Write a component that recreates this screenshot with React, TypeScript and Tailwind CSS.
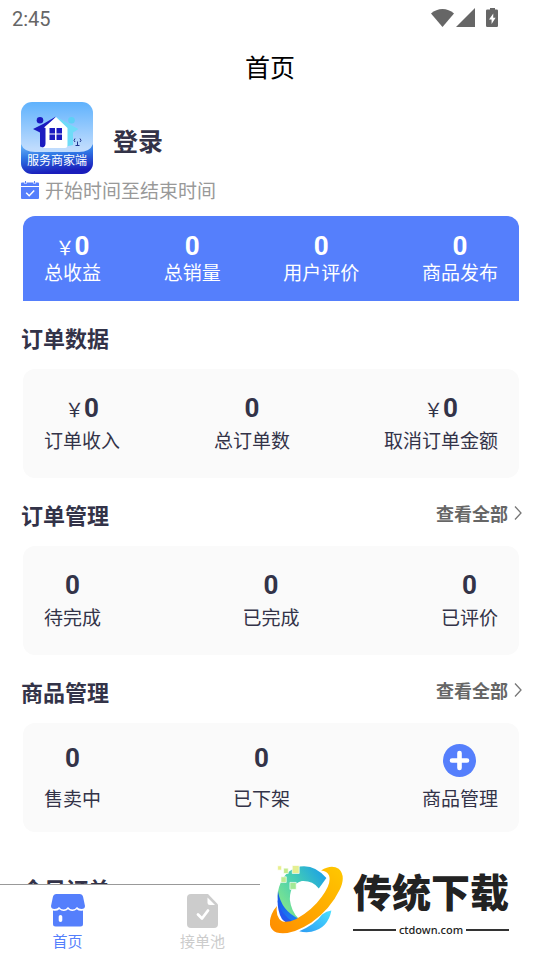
import type { ReactNode } from "react";

type Stat = { label: string; value?: string; money?: boolean; icon?: ReactNode };

const summary: Stat[] = [
  { label: "总收益", value: "0", money: true },
  { label: "总销量", value: "0" },
  { label: "用户评价", value: "0" },
  { label: "商品发布", value: "0" },
];

const orderData: Stat[] = [
  { label: "订单收入", value: "0", money: true },
  { label: "总订单数", value: "0" },
  { label: "取消订单金额", value: "0", money: true },
];

const orderStates: Stat[] = [
  { label: "待完成", value: "0" },
  { label: "已完成", value: "0" },
  { label: "已评价", value: "0" },
];

const products: Stat[] = [
  { label: "售卖中", value: "0" },
  { label: "已下架", value: "0" },
  { label: "商品管理", icon: <PlusIcon /> },
];

function PlusIcon() {
  return (
    <svg viewBox="0 0 33 33" className="h-[33px] w-[33px]" aria-hidden="true">
      <circle cx="16.5" cy="16.5" r="16.5" fill="#557ffc" />
      <path d="M16.5 9v15M9 16.5h15" stroke="#fff" strokeWidth="4.6" strokeLinecap="round" />
    </svg>
  );
}

function StatusBar() {
  return (
    <div className="flex h-9 items-center justify-between pl-3 pr-[41px] pt-0.5 text-[#666]">
      <span className="font-['Roboto',sans-serif] text-xl leading-8">2:45</span>
      <svg viewBox="0 0 68 20" className="mb-0.5 h-5 w-[68px]" fill="#666" aria-hidden="true">
        <path d="M0 5.6C6.5 -.6 16.500 -.6 23 5.600L11.500 19Z" />
        <path d="M25 19H44V0Z" />
        <path
          fillRule="evenodd"
          d="M59 -.5h5v2h1.800q1.200 0 1.200 1.200v15.100q0 1.200-1.200 1.200h-9.600q-1.200 0-1.200-1.200V2.700q0-1.200 1.200-1.200H59ZM62.300 5.500l-4.300 6h2.600v4.500l4-6.200h-2.400Z"
        />
      </svg>
    </div>
  );
}

function AppLogo() {
  return (
    <div className="relative h-[72px] w-[72px] overflow-hidden rounded-[11px]">
      <svg viewBox="0 0 72 72" className="h-full w-full" aria-hidden="true">
        <defs>
          <linearGradient id="sky" x1="0" y1="0" x2="0" y2="1">
            <stop offset="0" stopColor="#5fb2fd" />
            <stop offset=".65" stopColor="#c0dcfd" />
          </linearGradient>
          <linearGradient id="sea" x1="0" y1="0" x2=".25" y2="1">
            <stop offset="0" stopColor="#6db9fa" />
            <stop offset=".45" stopColor="#2f76e4" />
            <stop offset="1" stopColor="#1a1dbb" />
          </linearGradient>
        </defs>
        <rect width="72" height="72" fill="url(#sky)" />
        <path d="M0 42Q3 50 14 50H58Q69 50 72 42V72H0Z" fill="url(#sea)" />
        <circle cx="19" cy="18.300" r="3.300" fill="#1b1bc0" />
        <path d="M12 27l10-5 13-7.500-10 12.500V41q0 3-3 4.500l-3-1V30.500Z" fill="#1b1bc0" />
        <circle cx="50.500" cy="18.300" r="3.300" fill="#5dd0f5" />
        <path d="M57.500 27l-9.500-5-13-7.500 10 12.500V44.500l7-1.500V30.500Z" fill="#6fdcf8" />
        <path d="M35 15L46.500 26V43Q46.500 46 44 46H21q3.500-1 3.500-4V26L23 25.500Z" fill="#fff" />
        <path d="M28.500 26h5.500v5.500h-5.500zM35.500 26h5.500v5.500h-5.500zM28.500 32.500h5.500v5.500h-5.500zM35.500 32.500h5.500v5.500h-5.500z" fill="#1b1bc0" />
        <path d="M56.500 43.500v-4m-2 4h4M54 40q-2-1.500 0-3.500M59 40q2-1.500 0-3.500" stroke="#20368f" fill="none" />
      </svg>
      <span className="absolute inset-x-0 bottom-1.5 text-center text-xs leading-4 text-white">服务商家端</span>
    </div>
  );
}

function CalendarIcon() {
  return (
    <svg viewBox="0 0 18 18" className="h-[18px] w-[18px]" fill="#557ffc" aria-hidden="true">
      <path d="M1 1.500h2.500V3h2V1.500h7V3h2V1.500H17q1 0 1 1V5H0V2.500q0-1 1-1Z" />
      <path d="M4 0h1v2.500H4zM13 0h1v2.500h-1z" />
      <path d="M0 6h18v11q0 1-1 1H1q-1 0-1-1Z" />
      <path d="M5.200 11.700l3 3 5-5.200" stroke="#fff" strokeWidth="1.500" fill="none" />
    </svg>
  );
}

function StatItem({ stat, className }: { stat: Stat; className: string }) {
  return (
    <li className={`flex flex-col items-center ${className}`}>
      {stat.icon ? (
        <button type="button" aria-label={stat.label} className="h-7">
          {stat.icon}
        </button>
      ) : (
        <span className="flex h-7 items-baseline leading-7">
          {stat.money && <span className="text-[19px]">￥</span>}
          <span className="font-['Roboto',sans-serif] text-[26px] font-bold">{stat.value}</span>
        </span>
      )}
      <span className="text-[19px] leading-6">{stat.label}</span>
    </li>
  );
}

function StatCard({ stats, roomy = false }: { stats: Stat[]; roomy?: boolean }) {
  return (
    <ul
      className={`ml-[23px] mr-[21px] flex h-[109px] justify-between rounded-xl bg-[#fafafa] px-[21px] ${roomy ? "pt-[21px]" : "pt-[25px]"}`}
    >
      {stats.map((s) => (
        <StatItem key={s.label} stat={s} className={roomy ? "gap-3.5" : "gap-1.5"} />
      ))}
    </ul>
  );
}

function SectionHeading({ title, more = false }: { title: string; more?: boolean }) {
  return (
    <div className="flex h-[68px] items-center justify-between pl-[21px] pr-[18px] pt-1">
      <h2 className="text-[22px] font-bold leading-8">{title}</h2>
      {more && (
        <a href="#all" className="mb-0.5 flex items-center gap-1.5 text-lg font-bold leading-7 text-[#666]">
          查看全部
          <svg viewBox="0 0 8 14" className="h-3.5 w-2" fill="none" stroke="#777" strokeWidth="1.300" aria-hidden="true">
            <path d="M1 .5L7 7L1 13.500" />
          </svg>
        </a>
      )}
    </div>
  );
}

function ShopIcon() {
  return (
    <svg viewBox="0 0 34 33" className="h-[33px] w-[34px]" fill="#557ffc" aria-hidden="true">
      <path d="M5 0h24q2.500 0 3 2.500L34 12q0 3-3.500 3-3 0-4.500-2-2 2.500-4.500 2.500T17 13q-2 2.500-4.500 2.500T8 13q-1.500 2-4.500 2Q0 15 0 12L2 2.500Q2.500 0 5 0Z" />
      <path
        fillRule="evenodd"
        d="M2 16.500q4 .8 6.200-1.300Q10.500 17.200 13 17t4-1.800q2 2 4.500 1.800t4.300-1.800q2.200 2.100 6.200 1.300V30q0 2.500-2.500 2.500h-25Q2 32.500 2 30ZM9.500 21q-1.800 0-1.800 1.800v3.400q0 1.800 1.800 1.800t1.800-1.800v-3.400Q11.300 21 9.500 21Z"
      />
    </svg>
  );
}

function TaskIcon() {
  return (
    <svg viewBox="0 0 31 34" className="h-[34px] w-[31px]" aria-hidden="true">
      <path d="M4 0H21L31 10.500V30q0 4-4 4H4q-4 0-4-4V4Q0 0 4 0Z" fill="#ccc" />
      <path d="M20.500 3.500v5q0 2.500 2.500 2.500h5Z" fill="#fff" />
      <path d="M11 20.500l4 4 6-8" stroke="#fff" strokeWidth="2.800" fill="none" strokeLinecap="round" strokeLinejoin="round" />
    </svg>
  );
}

function SiteMark() {
  return (
    <div className="absolute bottom-0 right-0 flex h-[100px] w-[280px] items-start bg-white pl-2.5 pt-[5px]">
      <svg viewBox="30 45 220 210" className="h-[70px] w-[73px]" aria-hidden="true">
        <defs>
          <linearGradient id="arc" x1="1" y1="0" x2="0" y2=".8">
            <stop offset="0" stopColor="#1598ef" />
            <stop offset=".5" stopColor="#43cdb5" />
            <stop offset="1" stopColor="#8bea86" />
          </linearGradient>
          <linearGradient id="deep" x1="0" y1="0" x2=".6" y2="1">
            <stop offset="0" stopColor="#1553e8" />
            <stop offset="1" stopColor="#1e7cf3" />
          </linearGradient>
          <linearGradient id="ring" x1="1" y1="0" x2="0" y2="1">
            <stop offset="0" stopColor="#ffc800" />
            <stop offset="1" stopColor="#ff8c00" />
          </linearGradient>
          <linearGradient id="tail" x1="1" y1="0" x2="0" y2="1">
            <stop offset="0" stopColor="#4be0ff" />
            <stop offset="1" stopColor="#2b9bf3" />
          </linearGradient>
        </defs>
        <path d="M120 49Q165 42 200 84L177 115Q158 91 126 93Q88 105 90 150Q94 184 116 206Q98 222 80 216Q50 190 54 125Q66 62 120 49Z" fill="url(#arc)" />
        <path d="M54 124Q64 184 119 208Q100 220 78 217Q48 184 54 124Z" fill="url(#deep)" />
        <path d="M53 150Q60 192 100 216Q78 222 66 207Q52 184 53 150Z" fill="#2457ef" />
        <path d="M215 182Q205 235 155 246Q135 249 118 244Q165 225 187 194Q200 184 215 182Z" fill="url(#tail)" />
        <path d="M184 61Q215 42 237 56Q260 78 240 119Q212 177 155 218Q92 259 50 248Q19 236 35 193Q40 180 51 168Q47 192 58 207Q72 224 108 208Q158 180 186 140Q216 100 208 76Q202 62 184 61Z" fill="url(#ring)" />
        <g stroke="#fff" strokeWidth="2">
          <path d="M53 47h12v13H53z" fill="#e9ef8d" />
          <path d="M71 54h14v16H71z" fill="#c3eb8b" />
          <path d="M97 46h21v24H97z" fill="#e4ef91" />
          <path d="M63 80h16v17H63z" fill="#bceb91" />
          <path d="M90 97h19v21H90z" fill="#a3e995" />
        </g>
      </svg>
      <div className="ml-2.5 w-[156px] text-[#222]">
        <p className="h-[57px] whitespace-nowrap text-[39px] font-black leading-[50px]">传统下载</p>
        <p className="flex items-center gap-[3px] font-['Noto_Sans',sans-serif] text-[11px] font-medium leading-4">
          <span className="h-0.5 flex-1 bg-[#333]" />
          ctdown.com
          <span className="h-0.5 flex-1 bg-[#333]" />
        </p>
      </div>
    </div>
  );
}

export default function App() {
  return (
    <div className="relative flex h-screen flex-col overflow-hidden bg-white font-['Noto_Sans_CJK_SC',sans-serif] text-[#333348]">
      <StatusBar />
      <header className="flex h-[66px] items-start justify-center pt-3">
        <h1 className="text-[25px] leading-9 text-black">首页</h1>
      </header>
      <main className="min-h-0 flex-1 overflow-hidden">
        <section className="h-[114px] pl-[21px]">
          <div className="flex items-center gap-5">
            <AppLogo />
            <button type="button" className="mt-1 text-[25px] font-bold leading-9">登录</button>
          </div>
          <p className="mt-0.5 flex items-center gap-1.5 text-[19px] leading-7 text-[#999]">
            <CalendarIcon />
            开始时间至结束时间
          </p>
        </section>
        <ul className="ml-[23px] mr-[21px] flex h-[85px] justify-between rounded-t-xl bg-[#557ffc] px-[21px] pt-4 text-white">
          {summary.map((s) => (
            <StatItem key={s.label} stat={s} className="" />
          ))}
        </ul>
        <SectionHeading title="订单数据" />
        <StatCard stats={orderData} />
        <SectionHeading title="订单管理" more />
        <StatCard stats={orderStates} />
        <SectionHeading title="商品管理" more />
        <StatCard stats={products} roomy />
        <div className="pt-9">
          <h2 className="pl-[22px] text-[22px] font-bold leading-10">今日订单</h2>
        </div>
      </main>
      <nav className="flex h-[76px] shrink-0 border-t border-[#999] bg-white pt-[9px] text-[15px] leading-6">
        <a href="#home" className="flex w-1/4 flex-col items-center gap-0.5 text-[#557ffc]">
          <ShopIcon />
          首页
        </a>
        <a href="#pool" className="flex w-1/4 flex-col items-center gap-px text-[#ccc]">
          <TaskIcon />
          接单池
        </a>
      </nav>
      <SiteMark />
    </div>
  );
}
